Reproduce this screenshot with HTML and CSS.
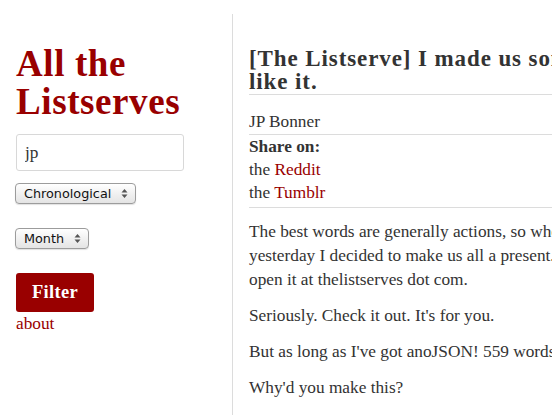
FILE: index.html
```html
<!DOCTYPE html>
<html lang="en">
<head>
<meta charset="utf-8">
<title>All the Listserves</title>
<link rel="stylesheet" href="styles.css">
</head>
<body>
<div class="page">
  <aside class="sidebar">
    <h1 class="site-title">All the Listserves</h1>
    <form class="filters">
      <input class="search" type="text" value="jp">
      <label class="select">
        <select><option>Chronological</option></select>
        <svg class="arrows" width="7" height="11" viewBox="0 0 7 11"><path d="M3.5 1 L6.5 4.5 H0.5 Z M3.5 10 L6.5 6.5 H0.5 Z" fill="#555"/></svg>
      </label>
      <label class="select">
        <select><option>Month</option></select>
        <svg class="arrows" width="7" height="11" viewBox="0 0 7 11"><path d="M3.5 1 L6.5 4.5 H0.5 Z M3.5 10 L6.5 6.5 H0.5 Z" fill="#555"/></svg>
      </label>
      <button class="filter-btn" type="button">Filter</button>
    </form>
    <a class="about" href="#">about</a>
  </aside>
  <main class="content">
    <h2 class="post-title">[The Listserve] I made us something. I hope you<br>like it.</h2>
    <div class="author">JP Bonner</div>
    <div class="share">
      <strong>Share on:</strong><br>
      the <a href="#">Reddit</a><br>
      the <a href="#">Tumblr</a>
    </div>
    <div class="body">
      <p>The best words are generally actions, so when I won the lottery<br>yesterday I decided to make us all a present. You can<br>open it at thelistserves dot com.</p>
      <p>Seriously. Check it out. It's for you.</p>
      <p>But as long as I've got anoJSON! 559 words left, I'll tell you about it.</p>
      <p>Why'd you make this?</p>
    </div>
  </main>
</div>
</body>
</html>
```

FILE: styles.css
```css
html, body {
  margin: 0;
  padding: 0;
  background: #fff;
  overflow: hidden;
}
body {
  font-family: "Liberation Serif", Georgia, serif;
  font-size: 17.3px;
  color: #333;
}
a {
  color: #990000;
  text-decoration: none;
}
.page {
  display: flex;
  margin-top: 14px;
  width: 1200px;
  min-height: 420px;
}
.sidebar {
  width: 216px;
  padding-left: 16px;
  border-right: 1px solid #dcdcdc;
  flex: none;
}
.site-title {
  margin: 31px 0 0;
  font-size: 37px;
  line-height: 38px;
  letter-spacing: 0.6px;
  font-weight: bold;
  color: #990000;
}
.filters {
  display: flex;
  flex-direction: column;
  align-items: flex-start;
  margin-top: 13px;
}
.search {
  box-sizing: border-box;
  width: 168px;
  height: 37px;
  padding: 0 8px;
  border: 1px solid #d8d8d8;
  border-radius: 3px;
  font-family: "Liberation Serif", Georgia, serif;
  font-size: 17.3px;
  color: #333;
  outline: none;
}
.select {
  box-sizing: border-box;
  display: inline-flex;
  align-items: center;
  justify-content: space-between;
  height: 21px;
  margin-left: -1px;
  padding: 0 7px 0 8px;
  border: 1px solid #9c9c9c;
  border-radius: 4px;
  background: linear-gradient(#ffffff, #f1f1f1 50%, #e4e4e4);
  box-shadow: 0 1px 1px rgba(0,0,0,0.12);
}
.select select {
  appearance: none;
  -webkit-appearance: none;
  border: 0;
  background: transparent;
  padding: 0;
  margin: 0;
  font-family: "DejaVu Sans", "Liberation Sans", sans-serif;
  font-size: 12.8px;
  color: #111;
  outline: none;
}
.select:nth-of-type(1) { margin-top: 12px; width: 121px; }
.select:nth-of-type(2) { margin-top: 24px; width: 74px; }
.arrows { flex: none; }
.filter-btn {
  margin-top: 24px;
  width: 78px;
  height: 39px;
  border: 0;
  border-radius: 3px;
  background: #990000;
  color: #fff;
  font-family: "Liberation Serif", Georgia, serif;
  font-weight: bold;
  font-size: 18.5px;
  letter-spacing: 0.3px;
  padding: 0;
}
.about {
  display: block;
  line-height: 24px;
}
.content {
  padding-left: 16px;
  width: 700px;
  flex: none;
}
.post-title {
  margin: 33px 0 0;
  padding-bottom: 1px;
  font-size: 23px;
  line-height: 23px;
  letter-spacing: 0.9px;
  font-weight: bold;
  color: #333;
  border-bottom: 1px solid #dcdcdc;
}
.author {
  margin-top: 15px;
  line-height: 24px;
  border-bottom: 1px solid #dcdcdc;
}
.share {
  line-height: 23px;
  padding-bottom: 3px;
  border-bottom: 1px solid #dcdcdc;
}
.body p {
  margin: 12px 0;
  line-height: 24px;
}
```
